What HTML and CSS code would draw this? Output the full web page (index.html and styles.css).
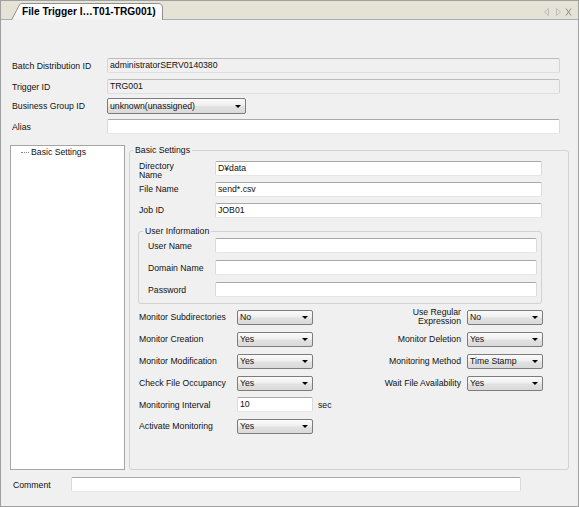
FILE: index.html
```html
<!DOCTYPE html>
<html>
<head>
<meta charset="utf-8">
<title>File Trigger</title>
<link rel="stylesheet" href="styles.css">
</head>
<body>
<div class="window">
  <div class="tabbar">
    <div class="tab">
      <svg class="tab-shape" width="152" height="17" viewBox="0 0 152 17">
        <defs>
          <linearGradient id="tg" x1="0" y1="0" x2="0" y2="1">
            <stop offset="0" stop-color="#ffffff"/>
            <stop offset="1" stop-color="#f4f4f4"/>
          </linearGradient>
        </defs>
        <path d="M0.5 17 L8.5 1.8 Q9.2 0.5 11 0.5 L147 0.5 Q151.5 0.5 151.5 5 L151.5 17" fill="url(#tg)" stroke="#8f8f8f"/>
      </svg>
      <span class="tab-title">File Trigger I…T01-TRG001)</span>
    </div>
    <svg class="tab-tools" width="30" height="18" viewBox="0 0 30 18">
      <path d="M6.5 7.5 L2.5 11 L6.5 14.5 Z" fill="none" stroke="#bdbdbd"/>
      <path d="M14.5 7.5 L18.5 11 L14.5 14.5 Z" fill="none" stroke="#bdbdbd"/>
      <path d="M24 7.5 L29 14.5 M29 7.5 L24 14.5" stroke="#8a8a8a" stroke-width="1"/>
    </svg>
  </div>

  <div class="content">
    <div class="head">
      <div class="hrow first">
        <span class="hlbl">Batch Distribution ID</span>
        <div class="field ro wide">administratorSERV0140380</div>
      </div>
      <div class="hrow second">
        <span class="hlbl">Trigger ID</span>
        <div class="field ro wide">TRG001</div>
      </div>
      <div class="hrow third">
        <span class="hlbl">Business Group ID</span>
        <div class="combo big"><span>unknown(unassigned)</span><i class="arrow"></i></div>
      </div>
      <div class="hrow fourth">
        <span class="hlbl">Alias</span>
        <div class="field wide"></div>
      </div>
    </div>

    <div class="lower">
      <div class="tree">
        <div class="node"><span class="dots"></span><span>Basic Settings</span></div>
      </div>

      <fieldset class="group main">
        <legend>Basic Settings</legend>
        <div class="gbody">
          <div class="grow dir">
            <span class="glbl two">Directory<br>Name</span>
            <div class="field gfield">D¥data</div>
          </div>
          <div class="grow">
            <span class="glbl">File Name</span>
            <div class="field gfield">send*.csv</div>
          </div>
          <div class="grow job">
            <span class="glbl">Job ID</span>
            <div class="field gfield">JOB01</div>
          </div>

          <fieldset class="group user">
            <legend>User Information</legend>
            <div class="ubody">
              <div class="urow">
                <span class="ulbl">User Name</span>
                <div class="field ufield"></div>
              </div>
              <div class="urow">
                <span class="ulbl">Domain Name</span>
                <div class="field ufield"></div>
              </div>
              <div class="urow">
                <span class="ulbl">Password</span>
                <div class="field ufield"></div>
              </div>
            </div>
          </fieldset>

          <div class="opts">
            <span class="olbl">Monitor Subdirectories</span>
            <div class="combo"><span>No</span><i class="arrow"></i></div>
            <span class="rlbl two">Use Regular<br>Expression</span>
            <div class="combo"><span>No</span><i class="arrow"></i></div>

            <span class="olbl">Monitor Creation</span>
            <div class="combo"><span>Yes</span><i class="arrow"></i></div>
            <span class="rlbl">Monitor Deletion</span>
            <div class="combo"><span>Yes</span><i class="arrow"></i></div>

            <span class="olbl">Monitor Modification</span>
            <div class="combo"><span>Yes</span><i class="arrow"></i></div>
            <span class="rlbl">Monitoring Method</span>
            <div class="combo"><span>Time Stamp</span><i class="arrow"></i></div>

            <span class="olbl">Check File Occupancy</span>
            <div class="combo"><span>Yes</span><i class="arrow"></i></div>
            <span class="rlbl">Wait File Availability</span>
            <div class="combo"><span>Yes</span><i class="arrow"></i></div>

            <span class="olbl">Monitoring Interval</span>
            <div class="field num">10</div>
            <span class="sec">sec</span>
            <span></span>

            <span class="olbl">Activate Monitoring</span>
            <div class="combo"><span>Yes</span><i class="arrow"></i></div>
            <span></span>
            <span></span>
          </div>
        </div>
      </fieldset>
    </div>

    <div class="crow">
      <span class="clbl">Comment</span>
      <div class="field cfield"></div>
    </div>
  </div>
</div>
</body>
</html>
```

FILE: styles.css
```css
* {
  box-sizing: border-box;
}

html,
body {
  margin: 0;
  padding: 0;
}

body {
  font-family: "Liberation Sans", Arial, sans-serif;
  font-size: 8.7px;
  color: #111;
  background: #ffffff;
}

.window {
  width: 579px;
  height: 507px;
  border: 1px solid #a0a0a0;
  background: #f0f0f0;
  display: flex;
  flex-direction: column;
}

/* ---------- tab bar ---------- */
.tabbar {
  flex: none;
  height: 19px;
  background: #e5e2d6;
  border-bottom: 1px solid #a3b0bb;
  display: flex;
  align-items: flex-end;
  padding-left: 10px;
  padding-right: 6px;
}

.tab {
  position: relative;
  width: 152px;
  height: 17px;
  margin-bottom: -1px;
  display: flex;
  align-items: center;
  padding-left: 11px;
  padding-top: 1px;
}

.tab-shape {
  position: absolute;
  left: 0;
  top: 0;
}

.tab-title {
  position: relative;
  font-weight: bold;
  font-size: 10.2px;
  line-height: 12px;
  white-space: nowrap;
  color: #000;
}

.tab-tools {
  margin-left: auto;
  align-self: flex-start;
}

/* ---------- content ---------- */
.content {
  flex: 1;
}

.head {
  padding-left: 11px;
}

.hrow {
  display: flex;
  align-items: center;
}

.hrow.first {
  margin-top: 38px;
}

.hrow.second {
  margin-top: 6px;
}

.hrow.third {
  margin-top: 4px;
}

.hrow.fourth {
  margin-top: 5px;
}

.hlbl {
  width: 95px;
  flex: none;
  white-space: nowrap;
}

.field {
  height: 15px;
  border: 1px solid;
  border-color: #a9a9a9 #dadada #e6e6e6 #dadada;
  border-radius: 2px;
  background: #ffffff;
  padding: 0 2px;
  line-height: 13px;
  white-space: nowrap;
  overflow: hidden;
  flex: none;
}

.field.ro {
  background: #f0f0f0;
  border-color: #bcbcbc #d4d4d4 #dedede #d4d4d4;
}

.wide {
  width: 453px;
}

.combo {
  display: flex;
  align-items: center;
  justify-content: space-between;
  width: 76px;
  height: 15px;
  border: 1px solid #7c7c7c;
  border-radius: 2px;
  background: linear-gradient(#fbfbfb, #efefef 45%, #e1e1e1 55%, #dadada);
  padding: 0 4px 0 2px;
  line-height: 13px;
  white-space: nowrap;
  flex: none;
}

.combo.big {
  width: 139px;
  height: 16px;
}

.arrow {
  width: 0;
  height: 0;
  border-left: 3px solid transparent;
  border-right: 3px solid transparent;
  border-top: 3px solid #000;
}

/* ---------- lower area ---------- */
.lower {
  display: flex;
  align-items: flex-start;
  margin-top: 11px;
  margin-left: 9px;
}

.tree {
  flex: none;
  width: 115px;
  height: 325px;
  background: #ffffff;
  border: 1px solid #a5a5a5;
  padding: 1px 0 0 10px;
}

.node {
  display: flex;
  align-items: center;
  line-height: 10px;
}

.dots {
  width: 8px;
  border-top: 1px dotted #808080;
  margin-right: 2px;
}

.group {
  margin: 0;
  min-width: 0;
  border: 1px solid #d2d2d2;
  border-radius: 3px;
}

.group legend {
  padding: 0 2px;
  line-height: 10px;
}

.group.main {
  flex: none;
  margin-left: 4px;
  width: 440px;
  height: 325px;
  padding: 0 0 0 3px;
}

.gbody {
  margin-left: 6px;
  width: 404px;
}

.grow {
  display: flex;
  align-items: flex-start;
  height: 21px;
}

.grow.dir {
  margin-top: 6px;
}

.grow.job {
  height: 23px;
}

.glbl {
  width: 76px;
  flex: none;
  line-height: 15px;
}

.glbl.two {
  line-height: 9px;
  padding-top: 1px;
}

.gfield {
  width: 327px;
}

.group.user {
  margin-left: -1px;
  width: 404px;
  padding: 0 0 6px 4px;
}

.ubody {
  margin-left: 5px;
}

.urow {
  display: flex;
  align-items: center;
  margin-top: 7px;
}

.urow:first-child {
  margin-top: 2px;
}

.ulbl {
  width: 67px;
  flex: none;
}

.ufield {
  width: 322px;
}

.opts {
  display: grid;
  grid-template-columns: 98px 76px 154px 76px;
  grid-template-rows: 22px 22px 22px 22px 21px 22px;
  align-items: center;
  margin-top: 2px;
}

.olbl {
  white-space: nowrap;
}

.rlbl {
  text-align: right;
  padding-right: 6px;
  white-space: nowrap;
}

.rlbl.two {
  line-height: 9px;
}

.num {
  width: 76px;
}

.sec {
  padding-left: 5px;
}

/* ---------- comment ---------- */
.crow {
  display: flex;
  align-items: center;
  margin-top: 7px;
  padding-left: 12px;
}

.clbl {
  width: 58px;
  flex: none;
}

.cfield {
  width: 450px;
}
```
